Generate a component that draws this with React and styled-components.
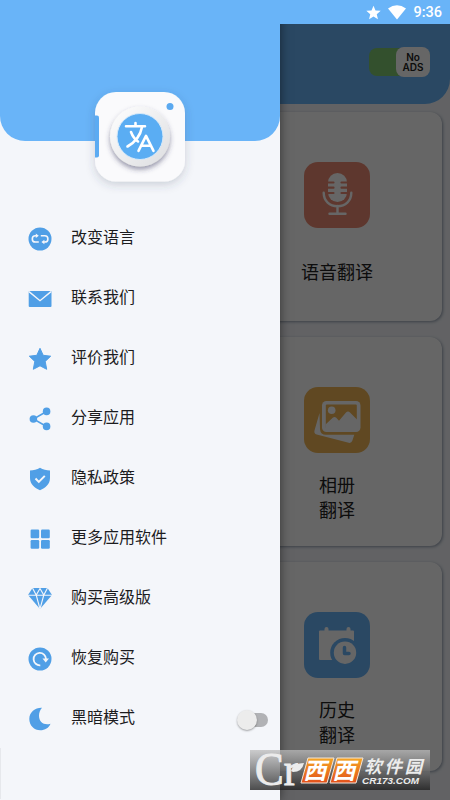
import React, { useState } from 'react';
import styled, { createGlobalStyle } from 'styled-components';

const GlobalStyle = createGlobalStyle`
  * {
    box-sizing: border-box;
  }

  body {
    margin: 0;
    font-family: Roboto, 'Noto Sans CJK SC', sans-serif;
  }
`;

const Screen = styled.div`
  position: relative;
  width: 450px;
  height: 800px;
  overflow: hidden;
  background: #f4f6fa;
`;

const StatusBar = styled.div`
  position: relative;
  z-index: 3;
  display: flex;
  align-items: center;
  justify-content: flex-end;
  height: 24px;
  padding-right: 8px;
  background: #69b4f8;
  color: #fff;
  font-size: 14.5px;
  font-weight: 500;

  svg {
    margin-right: 7px;
  }
`;

const AppHeader = styled.header`
  display: flex;
  align-items: center;
  justify-content: flex-end;
  height: 80px;
  padding: 0 20px 4px 0;
  background: #69b4f8;
  border-radius: 0 0 25px 25px;
`;

const AdsToggle = styled.div`
  display: flex;
  align-items: center;
  justify-content: flex-end;
  width: 61px;
  height: 28px;
  background: #7fc872;
  border-radius: 8px;
`;

const AdsKnob = styled.div`
  width: 34px;
  height: 30px;
  padding-top: 5px;
  background: #fff;
  border-radius: 8px;
  color: #222;
  font-family: Inter, sans-serif;
  font-size: 10px;
  font-weight: 600;
  line-height: 10px;
  text-align: center;
`;

const CardList = styled.main`
  display: flex;
  flex-direction: column;
  gap: 16px;
  padding: 8px 8px 0 232px;
`;

const Card = styled.section`
  display: flex;
  flex-direction: column;
  align-items: center;
  height: 209px;
  padding-top: 50px;
  background: #fff;
  border-radius: 12px;
  box-shadow: 1px 1px 3px rgba(60, 80, 110, 0.5);
`;

const Tile = styled.div`
  width: 66px;
  height: 66px;
  background: ${(props) => props.$color};
  border-radius: 14px;
`;

const CardLabel = styled.div`
  display: flex;
  flex: 1;
  flex-direction: column;
  justify-content: center;
  padding-bottom: 4px;
  color: #222;
  font-size: 18px;
  line-height: 25px;
  text-align: center;
`;

const Scrim = styled.div`
  position: absolute;
  inset: 24px 0 0;
  z-index: 1;
  background: rgba(0, 0, 0, 0.6);
`;

const Drawer = styled.aside`
  position: absolute;
  top: 0;
  left: 0;
  z-index: 2;
  width: 280px;
  height: 800px;
  background: #f4f6fa;
  box-shadow: 0 0 10px rgba(0, 0, 0, 0.5);
`;

const DrawerHeader = styled.div`
  height: 141px;
  background: #69b4f8;
  border-radius: 0 0 25px 25px;
`;

const Logo = styled.svg`
  display: block;
  width: 130px;
  height: 130px;
  margin: -69px auto 0;
`;

const Menu = styled.nav`
  display: flex;
  flex-direction: column;
  margin-top: 6px;
`;

const MenuItem = styled.div`
  display: flex;
  align-items: center;
  height: 60px;
  padding: 0 12px 0 28px;

  svg {
    margin-top: 2px;
  }
`;

const MenuLabel = styled.span`
  flex: 1;
  margin-left: 19px;
  color: #1c1c1e;
  font-size: 16px;
  line-height: 24px;
`;

const DrawerFooter = styled.div`
  height: 51px;
  border-left: 1px solid #e6e8ec;
`;

const SwitchTrack = styled.button`
  display: flex;
  align-items: center;
  justify-content: ${(props) => (props.$on ? 'flex-end' : 'flex-start')};
  width: 27px;
  height: 14px;
  margin-top: 4px;
  padding: 0;
  background: ${(props) => (props.$on ? '#9ccbf7' : '#b1b2b5')};
  border: 0;
  border-radius: 7px;
`;

const SwitchThumb = styled.span`
  flex: none;
  width: 20px;
  height: 20px;
  margin: 0 -4px;
  background: #ececec;
  border-radius: 50%;
  box-shadow: 0 1px 2px rgba(0, 0, 0, 0.35);
`;

const Watermark = styled.svg`
  position: absolute;
  left: 250px;
  top: 750px;
  z-index: 4;
  overflow: visible;
`;

const BLUE = '#509fe6';
const PAPER = '#f4f6fa';
const CORAL = '#ec8b73';
const AMBER = '#efb555';
const SKY = '#69b4f8';

const icons = {
  language: (
    <>
      <circle cx="12" cy="12" r="11.5" fill={BLUE} />
      <g fill="none" stroke={PAPER} strokeWidth="1.6">
        <path d="M10.8 15H7.400a3.100 3.100 0 0 1 0-6.200H9" />
        <path d="M12.800 8.800h4a3.100 3.100 0 0 1 0 6.200H15.500" />
      </g>
      <path d="M7.800 6.500l3 2.300-3 2.300zM16.400 12.700l-3 2.300 3 2.300z" fill={PAPER} />
    </>
  ),
  mail: (
    <>
      <rect x="0.7" y="4" width="22.8" height="16" rx="1" fill={BLUE} />
      <path d="M1 4.6l11 9.1 11-9.1" fill="none" stroke={PAPER} strokeWidth="1.4" />
    </>
  ),
  star: (
    <path
      d="M12 1.3l3.2 7 7.5.9-5.5 5.2 1.5 7.9L12 18.8l-6.700 3.500 1.500-7.900L1.300 9.200l7.500-.9z"
      fill={BLUE}
      stroke={BLUE}
      strokeWidth="1"
      strokeLinejoin="round"
    />
  ),
  share: (
    <>
      <path d="M18.5 4.5L5.5 12l13 7.5" fill="none" stroke={BLUE} strokeWidth="1.5" />
      <circle cx="18.6" cy="4.4" r="3.8" fill={BLUE} />
      <circle cx="5.4" cy="12" r="3.8" fill={BLUE} />
      <circle cx="18.6" cy="19.4" r="3.8" fill={BLUE} />
    </>
  ),
  shield: (
    <>
      <path d="M12 .8c3 2 6.5 2.5 10 2.7V11c0 6-4.5 10-10 12.200C6.500 21 2 17 2 11V3.500c3.500-.2 7-.7 10-2.700z" fill={BLUE} />
      <path d="M7.5 11.500l3.300 3.400 6-6" fill="none" stroke={PAPER} strokeWidth="2" />
    </>
  ),
  apps: (
    <g fill={BLUE}>
      <rect x="2.6" y="2.6" width="8.6" height="8.6" rx="1.2" />
      <rect x="13" y="2.6" width="8.8" height="8.6" rx="1.2" />
      <rect x="2.6" y="13" width="8.6" height="8.8" rx="1.2" />
      <rect x="13" y="13" width="8.8" height="8.8" rx="1.2" />
    </g>
  ),
  diamond: (
    <>
      <path d="M4.5 1h15L24 8 12 22 0 8z" fill={BLUE} />
      <path
        d="M0 8.2h24M4.5 1l3.7 7L12 1.500 15.800 8l3.700-7M8.200 8L12 22l3.800-14"
        fill="none"
        stroke={PAPER}
        strokeWidth="1.1"
      />
    </>
  ),
  restore: (
    <>
      <circle cx="12" cy="12" r="11.5" fill={BLUE} />
      <path d="M12.3 18.300A6.200 6.200 0 1 1 18 12" fill="none" stroke={PAPER} strokeWidth="1.8" />
      <path d="M14.500 11.500H21L17.700 15.500z" fill={PAPER} />
    </>
  ),
  moon: (
    <path d="M14 .8C7.500.5 1.300 5 1.300 12c0 6.500 4.900 11.300 11 11.300 4.600 0 8.600-2.300 10.200-6.500C16 18.700 11 15 11 8.800c0-3.200 1-5.800 3-8z" fill={BLUE} />
  ),
};

const menuItems = [
  { icon: 'language', label: '改变语言' },
  { icon: 'mail', label: '联系我们' },
  { icon: 'star', label: '评价我们' },
  { icon: 'share', label: '分享应用' },
  { icon: 'shield', label: '隐私政策' },
  { icon: 'apps', label: '更多应用软件' },
  { icon: 'diamond', label: '购买高级版' },
  { icon: 'restore', label: '恢复购买' },
];

function MenuIcon({ name }) {
  return (
    <svg width="24" height="24" viewBox="0 0 24 24">
      {icons[name]}
    </svg>
  );
}

function MicIcon() {
  return (
    <svg width="66" height="66" viewBox="0 0 66 66">
      <rect x="24" y="11" width="19" height="29" rx="9.5" fill="#fff" />
      <path
        d="M23.500 20.500h6M23.500 25.700h6M23.500 31h6M37.500 20.500h6M37.500 25.700h6M37.500 31h6"
        stroke={CORAL}
        strokeWidth="2.2"
        strokeLinecap="round"
      />
      <path
        d="M19.700 30.800c0 8.200 6 13.400 13.800 13.400s13.800-5.200 13.800-13.400M33.500 44v7M25.500 51.700h16"
        fill="none"
        stroke="#fff"
        strokeWidth="2.4"
        strokeLinecap="round"
      />
    </svg>
  );
}

function GalleryIcon() {
  return (
    <svg width="66" height="66" viewBox="0 0 66 66">
      <path d="M15.500 26L10.500 43.500q-.8 3 2.200 4l32 8.300q2.700.5 3.600-2l2-6H22q-5.500 0-6-5.500z" fill="#fff" />
      <rect x="18" y="14" width="38.5" height="31" rx="4.5" fill="#fff" />
      <rect x="21.800" y="17.500" width="31" height="24" rx="1" fill={AMBER} />
      <circle cx="27.700" cy="23.300" r="3.800" fill="#fff" />
      <path d="M21.500 37.500l7.500-7q1.500-1 3 0l3 3.200 7-8.200q2-2 4 0l7 7v9.500H21.500z" fill="#fff" />
    </svg>
  );
}

function HistoryIcon() {
  return (
    <svg width="66" height="66" viewBox="0 0 66 66">
      <path d="M16 18.500h33q1 0 1 1V48H16q-1 0-1-1V19.500q0-1 1-1z" fill="#fff" />
      <path d="M22.500 17v3M44.500 17v3" stroke="#fff" strokeWidth="4" strokeLinecap="round" />
      <circle cx="41" cy="40.700" r="14.800" fill={SKY} />
      <circle cx="41" cy="40.700" r="11.200" fill="#fff" />
      <path d="M40.500 35.500v6H45" fill="none" stroke={SKY} strokeWidth="3.5" strokeLinecap="round" strokeLinejoin="round" />
    </svg>
  );
}

function AppLogo() {
  return (
    <Logo viewBox="75 72 130 130">
      <defs>
        <linearGradient id="ring" x1="0" y1="0" x2="1" y2="1">
          <stop offset="0" stopColor="#fff" />
          <stop offset="1" stopColor="#dcdde0" />
        </linearGradient>
        <filter id="soft" x="-40%" y="-40%" width="180%" height="180%">
          <feDropShadow dx="0" dy="3" stdDeviation="5" floodColor="#33405a" floodOpacity="0.22" />
        </filter>
        <filter id="lift" x="-40%" y="-40%" width="180%" height="180%">
          <feDropShadow dx="0" dy="3" stdDeviation="2.5" floodColor="#34345c" floodOpacity="0.5" />
        </filter>
      </defs>
      <rect x="95" y="92" width="90" height="89.5" rx="21" fill="#fafafc" filter="url(#soft)" />
      <path d="M95 115.500h2q2 0 2 2v38q0 2-2 2h-2z" fill="#5cabf2" />
      <circle cx="170" cy="106.500" r="3.5" fill="#5ba9f0" />
      <circle cx="140" cy="136.500" r="30" fill="url(#ring)" filter="url(#lift)" />
      <circle cx="140" cy="136.500" r="23" fill="#5aadf3" stroke="#d5e9fa" strokeWidth="1" />
      <g fill="none" stroke="#fff" strokeWidth="2.6" strokeLinecap="round" strokeLinejoin="round">
        <path d="M126 126.300h19M135.500 123v3M142 127c-1.500 8-6.500 15-14.500 19.500M131 132c1.500 4 4 7.500 7 9.500" />
        <path d="M138.500 150.800l7.500-15 7.500 15M141.300 145.800h9.500" />
      </g>
    </Logo>
  );
}

function SiteMark() {
  return (
    <Watermark width="180" height="40" viewBox="0 0 180 40">
      <defs>
        <linearGradient id="plate" x1="0" y1="0" x2="0" y2="1">
          <stop offset="0" stopColor="#bdbdbd" stopOpacity="0.75" />
          <stop offset="1" stopColor="#222" stopOpacity="0.8" />
        </linearGradient>
        <linearGradient id="orange" x1="0" y1="0" x2="0" y2="1">
          <stop offset="0" stopColor="#f5a623" />
          <stop offset="1" stopColor="#e2501c" />
        </linearGradient>
      </defs>
      <rect width="180" height="40" fill="url(#plate)" />
      <text
        x="5"
        y="34.500"
        fontFamily="Liberation Serif, serif"
        fontSize="47"
        fill="#ececec"
        stroke="#ececec"
        strokeWidth="1"
        textLength="43"
        lengthAdjust="spacingAndGlyphs"
      >
        Cr
      </text>
      <path d="M41 21q3-8 13-8-2 9-11 9z" fill="#ececec" />
      <path d="M58 8h26l-7 25H51zM87 8h26l-7 25H80z" fill="url(#orange)" stroke="#f3e6da" strokeWidth="1" />
      <g transform="skewX(-14)" fontFamily="Noto Sans CJK SC, sans-serif" fontWeight="700">
        <text x="60.500" y="29" fontSize="23" fill="#fff">西</text>
        <text x="89.500" y="29" fontSize="23" fill="#fff">西</text>
        <text x="120" y="23" fontSize="17.500" textLength="58" fill="#ececec">软件园</text>
      </g>
      <text
        x="112"
        y="34"
        fontFamily="Liberation Sans, sans-serif"
        fontSize="9.500"
        fontStyle="italic"
        fontWeight="700"
        fill="#ececec"
        textLength="57"
        lengthAdjust="spacingAndGlyphs"
      >
        CR173.COM
      </text>
    </Watermark>
  );
}

function App() {
  const [dark, setDark] = useState(false);

  return (
    <>
      <GlobalStyle />
      <Screen>
        <StatusBar>
          <svg width="15" height="15" viewBox="0 0 24 24">
            <path d="M12 1l3.200 7.600 8.300.7-6.300 5.400 1.900 8.100L12 18.500l-7.100 4.300 1.900-8.100L.5 9.300l8.300-.7z" fill="#fff" />
          </svg>
          <svg width="18" height="15" viewBox="0 0 18 15">
            <path d="M0 3.500Q9-3 18 3.500L9 14.500z" fill="#fff" />
          </svg>
          9:36
        </StatusBar>
        <AppHeader>
          <AdsToggle>
            <AdsKnob>
              No
              <br />
              ADS
            </AdsKnob>
          </AdsToggle>
        </AppHeader>
        <CardList>
          <Card>
            <Tile $color={CORAL}>
              <MicIcon />
            </Tile>
            <CardLabel>语音翻译</CardLabel>
          </Card>
          <Card>
            <Tile $color={AMBER}>
              <GalleryIcon />
            </Tile>
            <CardLabel>
              <span>相册</span>
              <span>翻译</span>
            </CardLabel>
          </Card>
          <Card>
            <Tile $color={SKY}>
              <HistoryIcon />
            </Tile>
            <CardLabel>
              <span>历史</span>
              <span>翻译</span>
            </CardLabel>
          </Card>
        </CardList>
        <Scrim />
        <Drawer>
          <DrawerHeader />
          <AppLogo />
          <Menu>
            {menuItems.map((item) => (
              <MenuItem key={item.icon}>
                <MenuIcon name={item.icon} />
                <MenuLabel>{item.label}</MenuLabel>
              </MenuItem>
            ))}
            <MenuItem>
              <MenuIcon name="moon" />
              <MenuLabel>黑暗模式</MenuLabel>
              <SwitchTrack $on={dark} onClick={() => setDark(!dark)}>
                <SwitchThumb />
              </SwitchTrack>
            </MenuItem>
          </Menu>
          <DrawerFooter />
        </Drawer>
        <SiteMark />
      </Screen>
    </>
  );
}

export default App;
